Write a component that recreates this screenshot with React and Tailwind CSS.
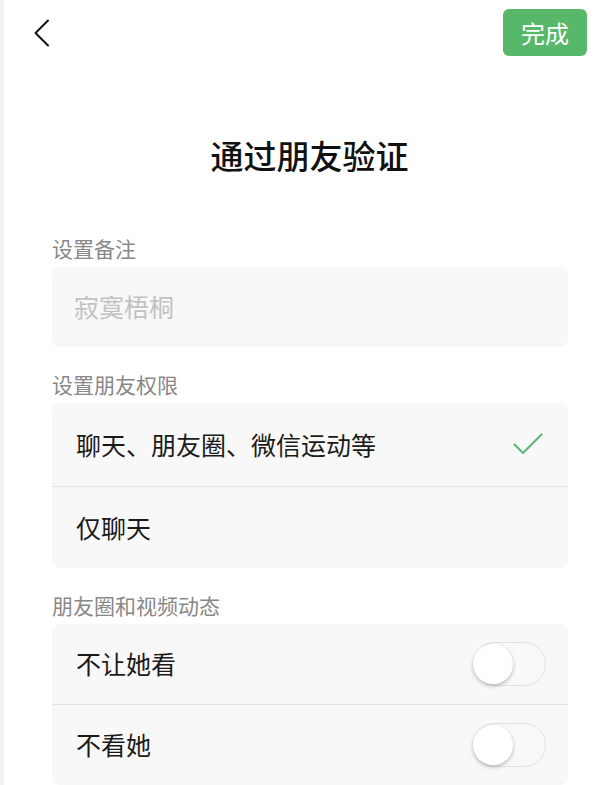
import { useState } from "react";

const FONT = { fontFamily: '"Noto Sans CJK SC", "Noto Sans", sans-serif' };

function BackIcon() {
  return (
    <svg width="16" height="28" viewBox="0 0 16 28" fill="none">
      <path d="M14 1.5L1.5 14L14 26.5" stroke="#111" strokeWidth="2" strokeLinecap="round" strokeLinejoin="round" />
    </svg>
  );
}

function CheckIcon() {
  return (
    <svg width="30" height="23" viewBox="0 0 30 23" fill="none">
      <path d="M1.5 11.5L10 20L28.5 1.5" stroke="#5fb878" strokeWidth="2.2" strokeLinecap="round" strokeLinejoin="round" />
    </svg>
  );
}

function Toggle({ on, onChange }) {
  return (
    <button
      type="button"
      onClick={onChange}
      className={`relative h-[44px] w-[73px] shrink-0 rounded-full border-[1.5px] ${
        on ? "border-[#5ab76a] bg-[#5ab76a]" : "border-[#e1e1e1] bg-[#f9f9f9]"
      }`}
    >
      <span
        className={`absolute top-[1px] h-[40px] w-[40px] rounded-full bg-white shadow-[0_2px_4px_rgba(0,0,0,0.25)] ${
          on ? "right-[0px]" : "left-[-1px]"
        }`}
      />
    </button>
  );
}

function Label({ children, first }) {
  return (
    <p className={`${first ? "pt-0" : "pt-[26px]"} pb-[8px] text-[21px] leading-[22px] text-[#888]`}>{children}</p>
  );
}

export default function App() {
  const [perm, setPerm] = useState("all");
  const [hideMine, setHideMine] = useState(false);
  const [hideTheirs, setHideTheirs] = useState(false);

  const perms = [
    { id: "all", label: "聊天、朋友圈、微信运动等", h: "h-[83px]" },
    { id: "chat", label: "仅聊天", h: "h-[82px]" },
  ];

  return (
    <div style={FONT} className="h-[785px] w-[615px] overflow-hidden border-l-[4px] border-[#f2f2f2] bg-white">
      <div className="flex items-start justify-between pl-[30px] pr-[28px] pt-[9px]">
        <button type="button" className="mt-[10px]">
          <BackIcon />
        </button>
        <button
          type="button"
          className="flex h-[47px] w-[84px] items-center justify-center rounded-[6px] bg-[#58b86a] text-[24px] text-white"
        >
          完成
        </button>
      </div>

      <h1 className="mt-[79px] text-center text-[33px] font-medium leading-[40px] text-[#111]">通过朋友验证</h1>

      <div className="mt-[62px] pl-[48px] pr-[47px]">
        <Label first>设置备注</Label>
        <div className="flex h-[80px] items-center rounded-[8px] bg-[#f8f8f8] px-[22px]">
          <input
            placeholder="寂寞梧桐"
            className="w-full bg-transparent text-[25px] text-[#111] outline-none placeholder:text-[#c2c2c2]"
          />
        </div>

        <Label>设置朋友权限</Label>
        <div className="rounded-[8px] bg-[#f8f8f8]">
          {perms.map((p, i) => (
            <div
              key={p.id}
              onClick={() => setPerm(p.id)}
              className={`flex ${p.h} items-center justify-between pl-[24px] pr-[25px] ${
                i > 0 ? "border-t border-[#e4e4e4]" : ""
              }`}
            >
              <span className="text-[25px] text-[#1a1a1a]">{p.label}</span>
              {perm === p.id ? <CheckIcon /> : null}
            </div>
          ))}
        </div>

        <Label>朋友圈和视频动态</Label>
        <div className="rounded-[8px] bg-[#f8f8f8]">
          <div className="flex h-[80px] items-center justify-between pl-[24px] pr-[22px]">
            <span className="text-[25px] text-[#1a1a1a]">不让她看</span>
            <Toggle on={hideMine} onChange={() => setHideMine(!hideMine)} />
          </div>
          <div className="flex h-[81px] items-center justify-between border-t border-[#e4e4e4] pl-[24px] pr-[22px]">
            <span className="text-[25px] text-[#1a1a1a]">不看她</span>
            <Toggle on={hideTheirs} onChange={() => setHideTheirs(!hideTheirs)} />
          </div>
        </div>
      </div>
    </div>
  );
}
